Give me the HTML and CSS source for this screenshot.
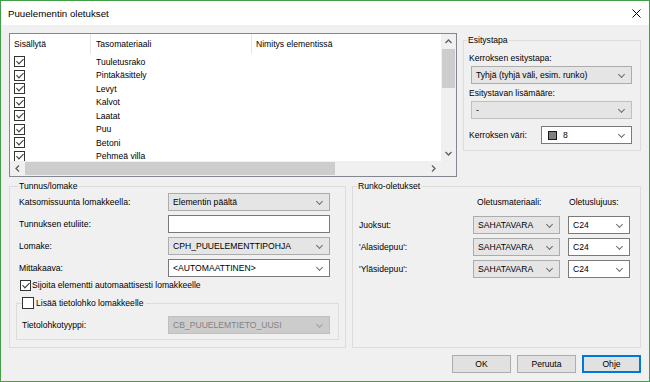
FILE: index.html
```html
<!DOCTYPE html>
<html lang="fi">
<head>
	<meta charset="UTF-8">
	<title>Puuelementin oletukset</title>
	<link rel="stylesheet" href="styles.css">
</head>
<body>
<div class="window">
	<div class="titlebar">
		<span class="title">Puuelementin oletukset</span>
		<svg class="close" width="9" height="9" viewBox="0 0 9 9"><path d="M0.5 0.5 L8.5 8.5 M8.5 0.5 L0.5 8.5" stroke="#000" stroke-width="1" fill="none"/></svg>
	</div>
	<div class="content">
		<div class="top-row">
			<div class="listbox">
				<div class="list-area">
					<div class="list-header">
						<span class="col col-1">Sisällytä</span>
						<span class="col col-2">Tasomateriaali</span>
						<span class="col col-3">Nimitys elementissä</span>
					</div>
					<div class="list-rows">
						<div class="list-row"><span class="col col-1"><span class="check on"></span></span><span class="col col-2">Tuuletusrako</span></div>
						<div class="list-row"><span class="col col-1"><span class="check on"></span></span><span class="col col-2">Pintakäsittely</span></div>
						<div class="list-row"><span class="col col-1"><span class="check on"></span></span><span class="col col-2">Levyt</span></div>
						<div class="list-row"><span class="col col-1"><span class="check on"></span></span><span class="col col-2">Kalvot</span></div>
						<div class="list-row"><span class="col col-1"><span class="check on"></span></span><span class="col col-2">Laatat</span></div>
						<div class="list-row"><span class="col col-1"><span class="check on"></span></span><span class="col col-2">Puu</span></div>
						<div class="list-row"><span class="col col-1"><span class="check on"></span></span><span class="col col-2">Betoni</span></div>
						<div class="list-row"><span class="col col-1"><span class="check on"></span></span><span class="col col-2">Pehmeä villa</span></div>
					</div>
				</div>
				<div class="vscroll">
					<span class="sb-btn"><svg width="7" height="5" viewBox="0 0 7 5"><path d="M0.5 4 L3.5 1 L6.5 4" stroke="#606060" stroke-width="1.3" fill="none"/></svg></span>
					<span class="vthumb"></span>
					<span class="sb-fill"></span>
					<span class="sb-btn"><svg width="7" height="5" viewBox="0 0 7 5"><path d="M0.5 1 L3.5 4 L6.5 1" stroke="#606060" stroke-width="1.3" fill="none"/></svg></span>
				</div>
				<div class="hscroll">
					<span class="sb-btn"><svg width="5" height="7" viewBox="0 0 5 7"><path d="M4 0.5 L1 3.5 L4 6.5" stroke="#606060" stroke-width="1.3" fill="none"/></svg></span>
					<span class="hthumb"></span>
					<span class="sb-fill"></span>
					<span class="sb-btn"><svg width="5" height="7" viewBox="0 0 5 7"><path d="M1 0.5 L4 3.5 L1 6.5" stroke="#606060" stroke-width="1.3" fill="none"/></svg></span>
				</div>
				<div class="corner"></div>
			</div>

			<fieldset class="group esitys">
				<legend>Esitystapa</legend>
				<div class="esitys-label first">Kerroksen esitystapa:</div>
				<div class="combo grey esitys-combo">Tyhjä (tyhjä väli, esim. runko)</div>
				<div class="esitys-label">Esitystavan lisämääre:</div>
				<div class="combo disabled-light esitys-combo">-</div>
				<div class="color-row">
					<span>Kerroksen väri:</span>
					<div class="combo white color-combo"><span class="swatch"></span>8</div>
				</div>
			</fieldset>
		</div>

		<div class="bottom-row">
			<fieldset class="group tunnus">
				<legend>Tunnus/lomake</legend>
				<div class="form-grid">
					<span>Katsomissuunta lomakkeella:</span>
					<div class="combo grey">Elementin päältä</div>
					<span>Tunnuksen etuliite:</span>
					<div class="textbox"></div>
					<span>Lomake:</span>
					<div class="combo grey">CPH_PUUELEMENTTIPOHJA</div>
					<span>Mittakaava:</span>
					<div class="combo white">&lt;AUTOMAATTINEN&gt;</div>
				</div>
				<div class="check-row"><span class="check on"></span>Sijoita elementti automaattisesti lomakkeelle</div>
				<fieldset class="group inner">
					<legend><span class="check"></span>Lisää tietolohko lomakkeelle</legend>
					<div class="inner-grid">
						<span>Tietolohkotyyppi:</span>
						<div class="combo disabled">CB_PUUELEMTIETO_UUSI</div>
					</div>
				</fieldset>
			</fieldset>

			<fieldset class="group runko">
				<legend>Runko-oletukset</legend>
				<div class="runko-grid">
					<span></span>
					<span class="head head-mat">Oletusmateriaali:</span>
					<span class="head head-luj">Oletuslujuus:</span>
				</div>
				<div class="runko-rows">
					<div class="runko-row">
						<span>Juoksut:</span>
						<div class="combo grey">SAHATAVARA</div>
						<div class="combo white">C24</div>
					</div>
					<div class="runko-row">
						<span>'Alasidepuu':</span>
						<div class="combo grey">SAHATAVARA</div>
						<div class="combo white">C24</div>
					</div>
					<div class="runko-row">
						<span>'Yläsidepuu':</span>
						<div class="combo grey">SAHATAVARA</div>
						<div class="combo white">C24</div>
					</div>
				</div>
			</fieldset>
		</div>

		<div class="buttons">
			<button class="btn">OK</button>
			<button class="btn">Peruuta</button>
			<button class="btn default">Ohje</button>
		</div>
	</div>
</div>
</body>
</html>
```

FILE: styles.css
```css
* {
	box-sizing: border-box;
}
body {
	margin: 0;
	font-family: "Liberation Sans", Arial, sans-serif;
	font-size: 8.6px;
	color: #000000;
	background-color: #ffffff;
}
.window {
	width: 650px;
	height: 382px;
	border: 1px solid #43a047;
	background-color: #f0f0f0;
	display: flex;
	flex-direction: column;
}
.titlebar {
	height: 24px;
	background-color: #ffffff;
	display: flex;
	align-items: center;
	justify-content: space-between;
	padding: 0 8px 0 7px;
}
.title {
	font-size: 9.7px;
}
.content {
	flex: 1;
	padding: 8px 8px 0 8px;
	display: flex;
	flex-direction: column;
}

/* list */
.top-row {
	display: flex;
	gap: 6px;
	height: 144px;
}
.listbox {
	width: 448px;
	height: 144px;
	border: 1px solid #828790;
	background-color: #ffffff;
	display: grid;
	grid-template-columns: 1fr 15px;
	grid-template-rows: 1fr 15px;
}
.list-area {
	overflow: hidden;
}
.list-header {
	display: flex;
	height: 20px;
	align-items: stretch;
}
.list-header .col {
	display: flex;
	align-items: center;
}
.col-1 {
	width: 81px;
	padding-left: 4px;
}
.col-2 {
	width: 161px;
	padding-left: 5px;
}
.col-3 {
	padding-left: 4px;
}
.list-header .col-1, .list-header .col-2 {
	border-right: 1px solid #e5e5e5;
}
.list-rows {
	margin-top: 1px;
}
.list-row {
	display: flex;
	align-items: center;
	height: 13.5px;
}
.list-row .col {
	display: flex;
	align-items: center;
}
.check {
	display: inline-block;
	position: relative;
	width: 11px;
	height: 11px;
	border: 1px solid #333333;
	background-color: #ffffff;
	flex-shrink: 0;
}
.check.on::after {
	content: "";
	position: absolute;
	left: 3px;
	top: 0px;
	width: 3px;
	height: 6px;
	border-right: 1px solid #333333;
	border-bottom: 1px solid #333333;
	transform: rotate(45deg);
}
.vscroll, .hscroll {
	background-color: #f0f0f0;
	display: flex;
}
.vscroll {
	flex-direction: column;
}
.sb-btn {
	width: 15px;
	height: 15px;
	display: flex;
	align-items: center;
	justify-content: center;
	flex-shrink: 0;
}
.vthumb {
	height: 39px;
	margin: 0 1px 0 1px;
	background-color: #cdcdcd;
}
.hthumb {
	width: 310px;
	margin: 1px 0;
	background-color: #cdcdcd;
}
.sb-fill {
	flex: 1;
}
.corner {
	background-color: #f0f0f0;
}

/* groups */
.group {
	margin: 0;
	padding: 0;
	border: 1px solid #dcdcdc;
	min-width: 0;
}
.group legend {
	padding: 0 1px;
	margin-left: -2px;
	line-height: 12px;
}
.esitys {
	width: 178px;
	height: 117px;
	margin-top: 1px;
	padding: 0 8px 0 5px;
}
.esitys-label {
	line-height: 12px;
	margin-top: 3px;
}
.esitys-label.first {
	margin-top: 6px;
}
.esitys-combo {
	margin: 2px 0 0 2px;
}
.color-row {
	display: flex;
	align-items: center;
	justify-content: space-between;
	margin-top: 7px;
}
.color-combo {
	width: 91px;
}
.swatch {
	display: inline-block;
	width: 9px;
	height: 9px;
	background-color: #808080;
	border: 1px solid #1a1a1a;
	margin: 0 6px 0 2px;
}

/* combos */
.combo, .textbox {
	position: relative;
	height: 18px;
	display: flex;
	align-items: center;
	padding-left: 4px;
	white-space: nowrap;
}
.combo::after {
	content: "";
	position: absolute;
	right: 7px;
	top: 5px;
	width: 4px;
	height: 4px;
	border-right: 1px solid #6d6d6d;
	border-bottom: 1px solid #6d6d6d;
	transform: rotate(45deg);
}
.combo.grey {
	background-color: #e5e5e5;
	border: 1px solid #acacac;
}
.combo.white, .textbox {
	background-color: #ffffff;
	border: 1px solid #7a7a7a;
}
.combo.disabled-light {
	background-color: #e5e5e5;
	border: 1px solid #bfbfbf;
}
.combo.disabled {
	background-color: #cccccc;
	border: 1px solid #bfbfbf;
	color: #838383;
}
.combo.disabled::after {
	border-color: #a0a0a0;
}

.bottom-row {
	display: flex;
	gap: 6px;
	height: 168px;
	margin-top: 3px;
}
.tunnus {
	width: 337px;
	padding: 0 15px 0 9px;
}
.tunnus > legend {
	margin-left: -1px;
}
.form-grid {
	display: grid;
	grid-template-columns: 149px 162px;
	grid-auto-rows: 18px;
	row-gap: 4px;
	align-items: center;
	margin-top: 1px;
}
.check-row {
	display: flex;
	align-items: center;
	gap: 1px;
	height: 12px;
	margin: 2px 0 0 1px;
	line-height: 12px;
}
.inner {
	margin: 6px -9px 0 -3px;
	padding: 0 8px 5px 5px;
}
.inner legend {
	display: flex;
	align-items: center;
	gap: 2px;
	margin-left: 0;
	padding: 0 2px 0 0;
}
.inner legend .check {
	width: 12px;
	height: 12px;
	border-color: #333333;
}
.inner-grid {
	display: grid;
	grid-template-columns: 146px 162px;
	align-items: center;
	margin-top: 7px;
}
.runko {
	flex: 1;
	padding: 0 10px 0 6px;
}
.runko-grid, .runko-row {
	display: grid;
	grid-template-columns: 106px 87px 62px;
	column-gap: 8px;
	align-items: center;
}
.runko-grid {
	line-height: 12px;
	margin-top: 4px;
}
.head-mat {
	padding-left: 4px;
}
.head-luj {
	padding-left: 1px;
}
.runko-rows {
	display: flex;
	flex-direction: column;
	gap: 4px;
	margin-top: 8px;
}

/* buttons */
.buttons {
	display: flex;
	justify-content: flex-end;
	gap: 6px;
	margin-top: 7px;
}
.btn {
	width: 59px;
	height: 18px;
	padding: 0;
	font-family: "Liberation Sans", Arial, sans-serif;
	font-size: 8.6px;
	color: #000000;
	background-color: #e1e1e1;
	border: 1px solid #adadad;
}
.btn.default {
	border: 1px solid #0078d7;
	box-shadow: inset 0 0 0 1px #0078d7;
}
```
